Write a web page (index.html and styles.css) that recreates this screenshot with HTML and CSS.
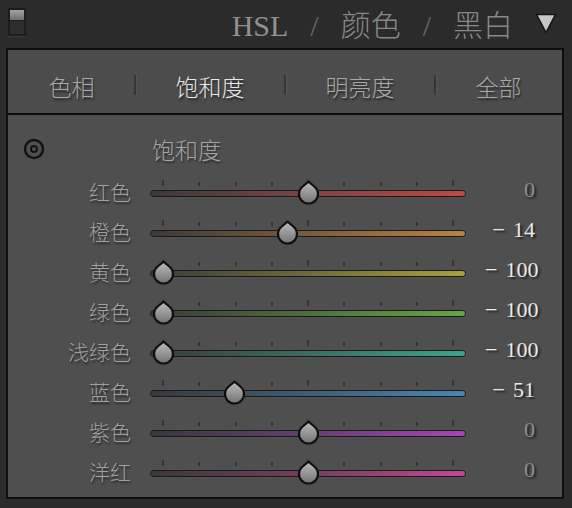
FILE: index.html
```html
<!DOCTYPE html>
<html lang="zh">
<head>
<meta charset="utf-8">
<link rel="stylesheet" href="styles.css">
</head>
<body>
<div class="app">
  <header class="header">
    <div class="collapse-icon"><span class="ci-top"></span><span class="ci-bottom"></span></div>
    <nav class="modes">
      <span class="mode mode-latin">HSL</span>
      <span class="slash">/</span>
      <span class="mode">颜色</span>
      <span class="slash">/</span>
      <span class="mode">黑白</span>
      <svg class="tri" width="22" height="21" viewBox="0 0 22 21"><polygon points="1.5,1.5 20.5,1.5 11,19.5" fill="#c6c6c6" stroke="#141414" stroke-width="1.6" stroke-linejoin="round"/></svg>
    </nav>
  </header>

  <section class="panel">
    <div class="tabs">
      <div class="tab tab-edge"><span>色相</span></div>
      <div class="tab tab-mid sep active"><span>饱和度</span></div>
      <div class="tab tab-mid sep"><span>明亮度</span></div>
      <div class="tab tab-edge sep"><span>全部</span></div>
    </div>
    <div class="divider"></div>
    <div class="body">
      <div class="row head-row">
        <svg class="radio" width="22" height="22" viewBox="0 0 22 22"><circle cx="11" cy="11" r="9" fill="none" stroke="#111" stroke-width="2.4"/><circle cx="11" cy="11" r="3" fill="none" stroke="#111" stroke-width="2"/></svg>
        <div class="section-title">饱和度</div>
        <div></div>
      </div>

      <div class="row">
        <div class="label">红色</div>
        <div class="slider">
          <div class="ticks"><i class="tall"></i><i></i><i></i><i></i><i class="tall"></i><i></i><i></i><i></i><i class="tall"></i></div>
          <div class="track red"></div>
          <svg class="thumb" style="left:146.5px" width="23" height="25" viewBox="0 0 23 25"><use href="#thumb-shape"/></svg>
        </div>
        <div class="value zero">0</div>
      </div>

      <div class="row">
        <div class="label">橙色</div>
        <div class="slider">
          <div class="ticks"><i class="tall"></i><i></i><i></i><i></i><i class="tall"></i><i></i><i></i><i></i><i class="tall"></i></div>
          <div class="track orange"></div>
          <svg class="thumb" style="left:126.2px" width="23" height="25" viewBox="0 0 23 25"><use href="#thumb-shape"/></svg>
        </div>
        <div class="value"><span class="minus">−</span>14</div>
      </div>

      <div class="row">
        <div class="label">黄色</div>
        <div class="slider">
          <div class="ticks"><i class="tall"></i><i></i><i></i><i></i><i class="tall"></i><i></i><i></i><i></i><i class="tall"></i></div>
          <div class="track yellow"></div>
          <svg class="thumb" style="left:1.5px" width="23" height="25" viewBox="0 0 23 25"><use href="#thumb-shape"/></svg>
        </div>
        <div class="value"><span class="minus">−</span>100</div>
      </div>

      <div class="row">
        <div class="label">绿色</div>
        <div class="slider">
          <div class="ticks"><i class="tall"></i><i></i><i></i><i></i><i class="tall"></i><i></i><i></i><i></i><i class="tall"></i></div>
          <div class="track green"></div>
          <svg class="thumb" style="left:1.5px" width="23" height="25" viewBox="0 0 23 25"><use href="#thumb-shape"/></svg>
        </div>
        <div class="value"><span class="minus">−</span>100</div>
      </div>

      <div class="row">
        <div class="label">浅绿色</div>
        <div class="slider">
          <div class="ticks"><i class="tall"></i><i></i><i></i><i></i><i class="tall"></i><i></i><i></i><i></i><i class="tall"></i></div>
          <div class="track aqua"></div>
          <svg class="thumb" style="left:1.5px" width="23" height="25" viewBox="0 0 23 25"><use href="#thumb-shape"/></svg>
        </div>
        <div class="value"><span class="minus">−</span>100</div>
      </div>

      <div class="row">
        <div class="label">蓝色</div>
        <div class="slider">
          <div class="ticks"><i class="tall"></i><i></i><i></i><i></i><i class="tall"></i><i></i><i></i><i></i><i class="tall"></i></div>
          <div class="track blue"></div>
          <svg class="thumb" style="left:72.5px" width="23" height="25" viewBox="0 0 23 25"><use href="#thumb-shape"/></svg>
        </div>
        <div class="value"><span class="minus">−</span>51</div>
      </div>

      <div class="row">
        <div class="label">紫色</div>
        <div class="slider">
          <div class="ticks"><i class="tall"></i><i></i><i></i><i></i><i class="tall"></i><i></i><i></i><i></i><i class="tall"></i></div>
          <div class="track purple"></div>
          <svg class="thumb" style="left:146.5px" width="23" height="25" viewBox="0 0 23 25"><use href="#thumb-shape"/></svg>
        </div>
        <div class="value zero">0</div>
      </div>

      <div class="row">
        <div class="label">洋红</div>
        <div class="slider">
          <div class="ticks"><i class="tall"></i><i></i><i></i><i></i><i class="tall"></i><i></i><i></i><i></i><i class="tall"></i></div>
          <div class="track magenta"></div>
          <svg class="thumb" style="left:146.5px" width="23" height="25" viewBox="0 0 23 25"><use href="#thumb-shape"/></svg>
        </div>
        <div class="value zero">0</div>
      </div>
    </div>
  </section>
</div>

<svg class="defs" width="0" height="0">
  <defs>
    <linearGradient id="thumb-fill" x1="0" y1="0" x2="0" y2="1">
      <stop offset="0" stop-color="#bdbdbd"/>
      <stop offset="1" stop-color="#727272"/>
    </linearGradient>
    <g id="thumb-shape">
      <path d="M11.5 1.6 L17.3 6.5 A9.5 9.5 0 1 1 5.7 6.5 Z" fill="url(#thumb-fill)" stroke="#0f0f0f" stroke-width="2.2" stroke-linejoin="round"/>
    </g>
  </defs>
</svg>
</body>
</html>
```

FILE: styles.css
```css
* { box-sizing: border-box; }

html, body {
  margin: 0;
  padding: 0;
  background: #2b2b2b;
}

.app {
  width: 572px;
  height: 508px;
  background: #2b2b2b;
  overflow: hidden;
}

.header {
  height: 48px;
  display: flex;
  align-items: center;
  justify-content: space-between;
  padding: 0 15px 0 8px;
}

.collapse-icon {
  width: 18px;
  height: 28px;
  margin-top: -4px;
  border: 2px solid #1c1c1c;
  display: flex;
  flex-direction: column;
  box-shadow: 0 1px 0 #3a3a3a;
}

.ci-top {
  height: 10px;
  background: linear-gradient(#a2a2a2, #707070);
}

.ci-bottom {
  flex: 1;
  background: #2e2e2e;
  border-top: 1px solid #1c1c1c;
}

.modes {
  display: flex;
  align-items: center;
  gap: 22px;
  margin-top: 4px;
}

.mode {
  font-family: "Liberation Serif", "Noto Sans CJK SC", serif;
  font-size: 30px;
  font-weight: 300;
  color: #888888;
  line-height: 1;
}

.mode-latin {
  color: #919191;
  font-size: 30px;
}

.slash {
  font-family: "Liberation Serif", serif;
  font-size: 30px;
  color: #676767;
  line-height: 1;
}

.tri {
  display: block;
  margin-top: -5px;
}

.panel {
  margin: 0 8px 0 6px;
  border: 2px solid #0e0e0e;
  background: #4f4f4f;
}

.tabs {
  display: flex;
  height: 63px;
  background: #4c4c4c;
}

.tab {
  position: relative;
  display: flex;
  align-items: center;
  justify-content: center;
  padding-top: 9px;
  font-family: "Noto Sans CJK SC", sans-serif;
  font-weight: 300;
  font-size: 23px;
  color: #a8a8a8;
  text-shadow: 1px 2px 2px rgba(0, 0, 0, 0.55);
}

.tab-edge { width: 127px; }
.tab-mid { width: 150px; }

.tab.active { color: #e6e6e6; }

.sep::before {
  content: "";
  position: absolute;
  left: -1px;
  top: 25px;
  width: 2px;
  height: 20px;
  background: #363636;
  box-shadow: 1px 0 0 #555;
}

.divider {
  height: 2px;
  background: #0e0e0e;
}

.body {
  padding: 19px 0 7px 0;
  background: #4f4f4f;
}

.row {
  display: grid;
  grid-template-columns: 123px 316px 50px;
  column-gap: 19px;
  height: 40px;
  align-items: center;
}

.head-row {
  height: 36px;
  align-items: start;
}

.radio {
  display: block;
  margin: 4px 0 0 15px;
}

.section-title {
  font-family: "Noto Sans CJK SC", sans-serif;
  font-weight: 300;
  font-size: 23px;
  line-height: 30px;
  color: #a4a4a4;
  padding-left: 2px;
  text-shadow: 1px 2px 2px rgba(0, 0, 0, 0.45);
}

.label {
  font-family: "Noto Sans CJK SC", sans-serif;
  font-weight: 300;
  font-size: 21px;
  line-height: 40px;
  color: #a0a0a0;
  text-align: right;
  padding-bottom: 5px;
  text-shadow: 1px 2px 2px rgba(0, 0, 0, 0.5);
}

.slider {
  position: relative;
  height: 40px;
  padding-top: 7px;
}

.ticks {
  display: flex;
  justify-content: space-between;
  align-items: flex-end;
  height: 6px;
  padding: 0 12px;
  margin-bottom: 4px;
}

.ticks i {
  display: block;
  width: 2px;
  height: 4px;
  background: #343434;
}

.ticks i.tall { height: 6px; }

.track {
  height: 7px;
  border: 1.5px solid #1b1b1b;
  border-radius: 4px;
}

.red     { background: linear-gradient(90deg, #3c3939, #7a4444 50%, #bf4848); }
.orange  { background: linear-gradient(90deg, #3c3a38, #7a5c3c 50%, #bb8240); }
.yellow  { background: linear-gradient(90deg, #3b3b38, #6f6b3c 50%, #ab9f3e); }
.green   { background: linear-gradient(90deg, #393b38, #4f6e3e 50%, #65a745); }
.aqua    { background: linear-gradient(90deg, #383b3a, #3d6c62 50%, #3ca48c); }
.blue    { background: linear-gradient(90deg, #38393c, #3f5d73 50%, #4886b3); }
.purple  { background: linear-gradient(90deg, #3a383c, #643f70 50%, #a546b3); }
.magenta { background: linear-gradient(90deg, #3c383a, #723f5e 50%, #c24890); }

.thumb {
  position: absolute;
  top: 7px;
  display: block;
}

.value {
  font-family: "Liberation Serif", serif;
  font-size: 22px;
  line-height: 40px;
  text-align: right;
  white-space: nowrap;
  color: #e8e8e8;
  padding-bottom: 6px;
  text-shadow: 2px 2px 2px rgba(0, 0, 0, 0.6);
}

.minus {
  display: inline-block;
  margin-right: 8px;
}

.value.zero { color: #8c8c8c; }

.defs {
  position: absolute;
  width: 0;
  height: 0;
}
```
